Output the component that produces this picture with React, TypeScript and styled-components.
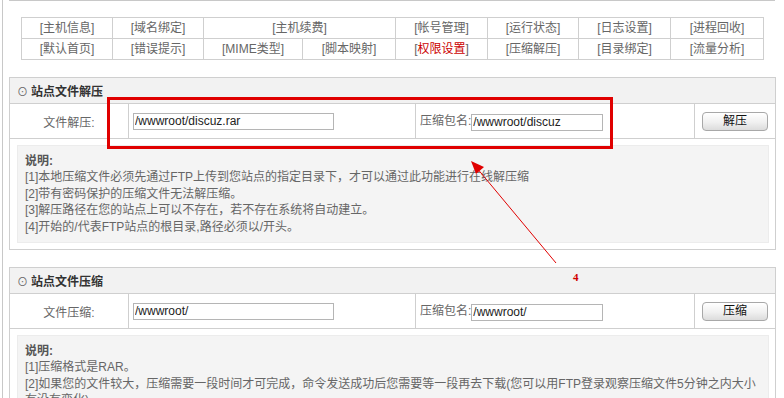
import React from "react";
import styled, { createGlobalStyle } from "styled-components";

const Global = createGlobalStyle`
  html, body { margin: 0; padding: 0; background: #fff; overflow: hidden; }
  body { width: 784px; height: 398px; font-family: "Liberation Sans", "Noto Sans CJK SC", sans-serif; font-size: 12px; color: #666; }
  * { box-sizing: border-box; }
`;

const Page = styled.div`
  position: relative;
  width: 784px;
  height: 398px;
  padding-left: 2px;
  overflow: hidden;
`;

const Frame = styled.div`
  border-left: 1px solid #c8c8c8;
  height: 398px;
  padding-left: 6px;
`;

const TopRule = styled.div`
  width: 766px;
  border-top: 1px solid #c8c8c8;
`;

const NavTable = styled.table`
  margin: 16px 0 0 12px;
  border-collapse: collapse;
  table-layout: fixed;
  width: 742px;
`;

const NavCell = styled.td`
  border: 1px solid #cfcfcf;
  height: 21px;
  padding: 0;
  text-align: center;
  color: #666;
  line-height: 19px;
  white-space: nowrap;
`;

const Active = styled.span`
  color: #c00;
`;

const Section = styled.table`
  margin-top: 17px;
  border-collapse: collapse;
  table-layout: fixed;
  width: 766px;
`;

const HeadCell = styled.td`
  border: 1px solid #cfcfcf;
  background: #f2f2f2;
  height: 26px;
  padding: 0 0 0 7px;
  font-weight: bold;
  color: #333;
`;

const Dot = styled.span`
  font-weight: normal;
  color: #666;
  font-size: 11px;
  margin-right: 3px;
`;

const FieldCell = styled.td<{ $center?: boolean }>`
  border: 1px solid #cfcfcf;
  height: 35px;
  padding: ${(p) => (p.$center ? "0" : "0 0 0 4px")};
  text-align: ${(p) => (p.$center ? "center" : "left")};
  color: #666;
  white-space: nowrap;
`;

const Input = styled.input`
  height: 17px;
  border: 1px solid #b5b5b5;
  padding: 0 1px;
  font-family: "Liberation Sans", "Noto Sans CJK SC", sans-serif;
  font-size: 12px;
  color: #222;
  vertical-align: middle;
  outline: none;
  width: ${(p) => p.width}px;
`;

const Button = styled.button`
  width: 66px;
  height: 19px;
  border: 1px solid #a8a8a8;
  border-radius: 4px;
  background: linear-gradient(#ffffff, #f0f0f0 55%, #dcdcdc);
  font-family: "Liberation Sans", "Noto Sans CJK SC", sans-serif;
  font-size: 12px;
  color: #111;
  padding: 0;
  line-height: 17px;
  vertical-align: middle;
`;

const DescCell = styled.td`
  border: 1px solid #cfcfcf;
  padding: 6px 6px 6px 7px;
`;

const DescBox = styled.div`
  background: #f4f4f4;
  border: 1px solid #ececec;
  padding: 7px;
  line-height: 16.4px;
  color: #666;
`;

const DescTitle = styled.div`
  font-weight: bold;
  color: #555;
`;

const RedBox = styled.div`
  position: absolute;
  left: 107px;
  top: 97px;
  width: 506px;
  height: 52px;
  border: 3px solid #e00000;
`;

const ArrowSvg = styled.svg`
  position: absolute;
  left: 0;
  top: 0;
  pointer-events: none;
`;

const Number = styled.div`
  position: absolute;
  left: 573px;
  top: 271px;
  color: #d00000;
  font-family: "Liberation Serif", serif;
  font-size: 11px;
  font-weight: bold;
`;

const navRow1 = [
  { t: "[主机信息]" },
  { t: "[域名绑定]" },
  { t: "[主机续费]", span: 2 },
  { t: "[帐号管理]" },
  { t: "[运行状态]" },
  { t: "[日志设置]" },
  { t: "[进程回收]" },
];

const navRow2 = ["[默认首页]", "[错误提示]", "[MIME类型]", "[脚本映射]", "ACTIVE", "[压缩解压]", "[目录绑定]", "[流量分析]"];

type SecProps = {
  title: string;
  label: string;
  value1: string;
  value2: string;
  button: string;
  notes: string[];
};

function FileSection({ title, label, value1, value2, button, notes }: SecProps) {
  return (
    <Section>
      <colgroup>
        <col style={{ width: 119 }} />
        <col style={{ width: 287 }} />
        <col style={{ width: 279 }} />
        <col style={{ width: 81 }} />
      </colgroup>
      <tbody>
        <tr>
          <HeadCell colSpan={4}>
            <Dot>⊙</Dot>
            {title}
          </HeadCell>
        </tr>
        <tr>
          <FieldCell $center>{label}</FieldCell>
          <FieldCell>
            <Input width={201} defaultValue={value1} readOnly />
          </FieldCell>
          <FieldCell>
            压缩包名:<Input width={132} defaultValue={value2} readOnly />
          </FieldCell>
          <FieldCell $center>
            <Button>{button}</Button>
          </FieldCell>
        </tr>
        <tr>
          <DescCell colSpan={4}>
            <DescBox>
              <DescTitle>说明:</DescTitle>
              {notes.map((n) => (
                <div key={n}>{n}</div>
              ))}
            </DescBox>
          </DescCell>
        </tr>
      </tbody>
    </Section>
  );
}

export default function App() {
  return (
    <Page>
      <Global />
      <Frame>
        <TopRule />
        <NavTable>
          <colgroup>
            {[91, 91, 99, 93, 92, 91, 92, 93].map((w, i) => (
              <col key={i} style={{ width: w }} />
            ))}
          </colgroup>
          <tbody>
            <tr>
              {navRow1.map((c) => (
                <NavCell key={c.t} colSpan={c.span || 1}>
                  {c.t}
                </NavCell>
              ))}
            </tr>
            <tr>
              {navRow2.map((t) =>
                t === "ACTIVE" ? (
                  <NavCell key={t}>
                    [<Active>权限设置</Active>]
                  </NavCell>
                ) : (
                  <NavCell key={t}>{t}</NavCell>
                )
              )}
            </tr>
          </tbody>
        </NavTable>
        <FileSection
          title="站点文件解压"
          label="文件解压:"
          value1="/wwwroot/discuz.rar"
          value2="/wwwroot/discuz"
          button="解压"
          notes={[
            "[1]本地压缩文件必须先通过FTP上传到您站点的指定目录下，才可以通过此功能进行在线解压缩",
            "[2]带有密码保护的压缩文件无法解压缩。",
            "[3]解压路径在您的站点上可以不存在，若不存在系统将自动建立。",
            "[4]开始的/代表FTP站点的根目录,路径必须以/开头。",
          ]}
        />
        <FileSection
          title="站点文件压缩"
          label="文件压缩:"
          value1="/wwwroot/"
          value2="/wwwroot/"
          button="压缩"
          notes={[
            "[1]压缩格式是RAR。",
            "[2]如果您的文件较大，压缩需要一段时间才可完成，命令发送成功后您需要等一段再去下载(您可以用FTP登录观察压缩文件5分钟之内大小有没有变化)",
          ]}
        />
      </Frame>
      <RedBox />
      <ArrowSvg width="784" height="398" viewBox="0 0 784 398">
        <line x1="556" y1="263" x2="476" y2="167" stroke="#e00000" strokeWidth="1" />
        <polygon points="471,161 484,167 476,174" fill="#e00000" />
      </ArrowSvg>
      <Number>4</Number>
    </Page>
  );
}
